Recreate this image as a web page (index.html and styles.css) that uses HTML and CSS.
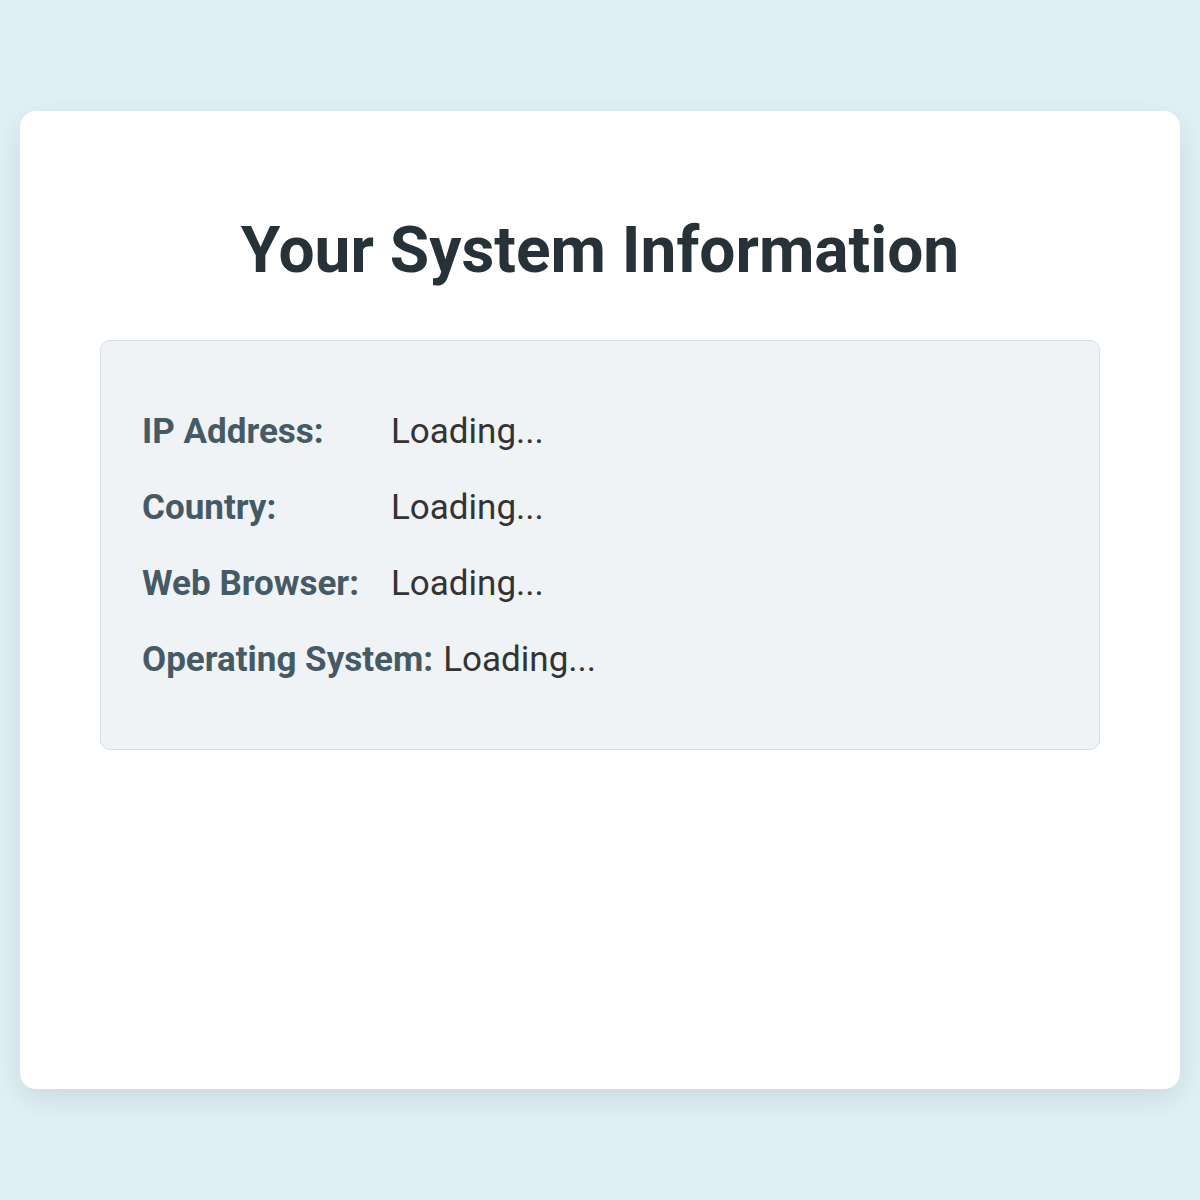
FILE: index.html
```html
<!DOCTYPE html>
<html lang="en">
<head>
    <meta charset="UTF-8">
    <meta name="viewport" content="width=device-width, initial-scale=1.0">
    <title>System Information</title>
    <link rel="stylesheet" href="styles.css">
</head>
<body>

<div class="container">
    <h1>Your System Information</h1>
    <div class="info-box">
        <div class="info-row">
            <span class="label">IP Address:</span>
            <span class="value" id="ip">Loading...</span>
        </div>
        <div class="info-row">
            <span class="label">Country:</span>
            <span class="value" id="country">Loading...</span>
        </div>
        <div class="info-row">
            <span class="label">Web Browser:</span>
            <span class="value" id="browser">Loading...</span>
        </div>
        <div class="info-row">
            <span class="label">Operating System:</span>
            <span class="value" id="os">Loading...</span>
        </div>
    </div>
</div>

</body>
</html>
```

FILE: styles.css
```css
body {
    font-family: Roboto, "Noto Sans", sans-serif;
    background-color: #e1f0f7;
    margin: 0;
    padding: 0 20px;
    display: flex;
    align-items: center;
    justify-content: center;
    height: 100vh;
}

.container {
    width: 100%;
    height: 978px;
    box-sizing: border-box;
    background-color: #fff;
    border-radius: 16px;
    padding: 80px;
    box-shadow: 0 10px 30px rgba(0, 0, 0, 0.1);
}

h1 {
    margin: 22px 0 50px;
    text-align: center;
    font-size: 64px;
    font-weight: 700;
    color: #263238;
    line-height: 1.2;
}

.info-box {
    background-color: #eff3f6;
    border: 1px solid #d9dee2;
    border-radius: 10px;
    padding: 64px 41px 62px;
    display: flex;
    flex-direction: column;
    gap: 22px;
}

.info-row {
    display: flex;
    gap: 10px;
    font-size: 35px;
    line-height: 54px;
}

.label {
    min-width: 239px;
    font-weight: 700;
    color: #455a64;
}

.value {
    color: #333;
}
```
